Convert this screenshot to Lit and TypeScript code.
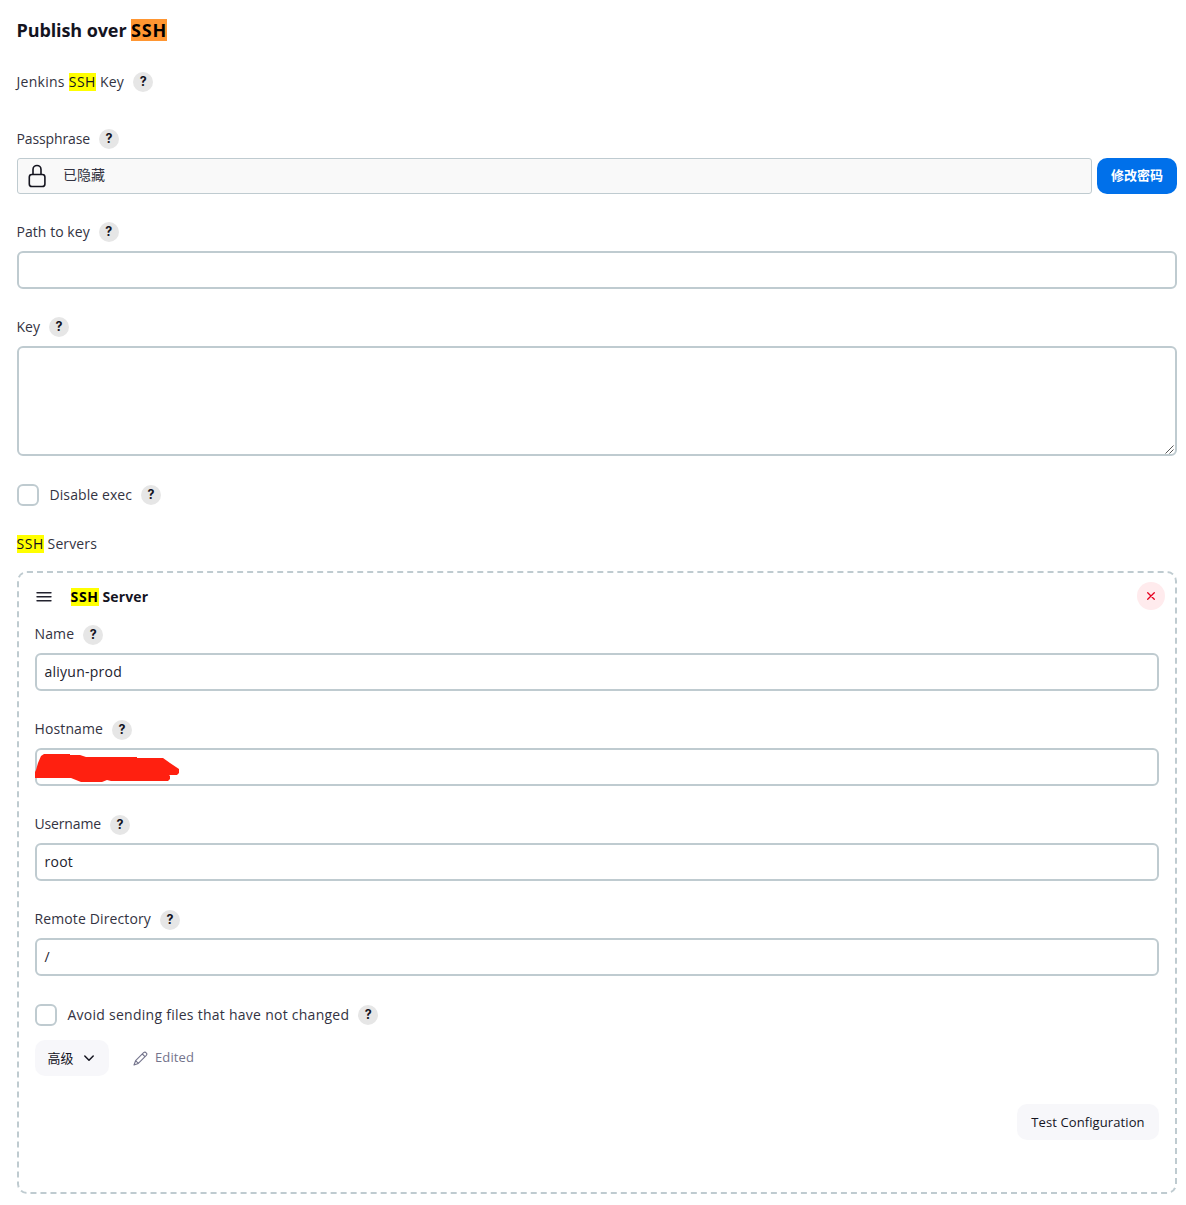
import { LitElement, html, css, svg, nothing } from "lit";
import { customElement, property } from "lit/decorators.js";

const FONT = css`"Segoe UI", "Open Sans", "Noto Sans", "Noto Sans CJK SC", sans-serif`;

@customElement("help-button")
class HelpButton extends LitElement {
  static styles = css`
    :host { display: flex; flex: none; width: 20px; height: 20px; border-radius: 50%; background: #e6e6e6;
      align-items: center; justify-content: center; font: 700 12.5px/20px "Inter", sans-serif; color: #14141f; }
  `;
  render() { return html`?`; }
}

@customElement("form-label")
class FormLabel extends LitElement {
  @property() mark = "";
  @property() before = "";
  @property() after = "";
  @property({ type: Number }) spacing = 0;
  @property({ type: Boolean }) help = false;
  static styles = css`
    :host { display: flex; align-items: center; height: 20px; gap: 9px; }
    .text { white-space: pre; font: 400 14px/20px ${FONT}; color: #333342; margin-left: -0.5px; }
    .mark { background: #ff0; color: #14141f; line-height: 18px; display: inline-block; height: 18px; letter-spacing: 0.55px; }
    :host([raised]) .text { position: relative; top: -1px; }
  `;
  render() {
    return html`<span class="text" style="letter-spacing:${this.spacing}px">${this.before}${this.mark ? html`<span class="mark">${this.mark}</span>` : nothing}${this.after}</span>${this.help ? html`<help-button></help-button>` : nothing}`;
  }
}

@customElement("app-root")
class AppRoot extends LitElement {
  static styles = css`
    * { box-sizing: border-box; }
    :host { display: block; height: 1205px; background: #fff; font: 400 14px/20px ${FONT}; color: #14141f; box-sizing: border-box; padding: 19px 9px 0 17px; }
    .page { display: flex; flex-direction: column; }
    .title { margin: 0 0 31px -0.5px; height: 22px; font-size: 18px; line-height: 22px; font-weight: 700; white-space: pre; letter-spacing: -0.1px; }
    .title span { display: inline-block; height: 22px; background: #ff9632; color: #000; letter-spacing: 0.8px; }
    .gap37 { margin-bottom: 37px; }
    .gap9 { margin-bottom: 9px; }
    .gap8 { margin-bottom: 8px; }
    .secret { display: flex; gap: 5px; margin-bottom: 28px; }
    .hidden { flex: 1; height: 36px; border: 1px solid #bfcbd0; border-radius: 3px; background: #f9f9f9; display: flex; align-items: center; padding-left: 7px; gap: 14px; line-height: 34px; }
    .hidden svg { width: 24px; height: 24px; }
    .hidden span { position: relative; top: -1px; color: #333342; }
    .primary { width: 80px; height: 36px; border-radius: 10px; background: #0070ea; color: #fff; display: grid; place-items: center; font-size: 13px; font-weight: 700; line-height: 18px; padding-bottom: 2px; }
    .input { height: 38px; border: 2px solid #bfcbd0; border-radius: 6px; background: #fff; padding: 0 7.5px; line-height: 33px; margin-bottom: 28px; position: relative; color: #22222e; letter-spacing: 0.25px; }
    .card .input:not(.last) { margin-bottom: 29px; }
    .area { height: 110px; display: flex; align-items: flex-end; justify-content: flex-end; padding: 0; }
    .area svg { width: 9px; height: 9px; margin: 0 1px 0 0; }
    .scribble { position: absolute; left: -2px; top: 2px; width: 146px; height: 30px; }
    .check { display: flex; align-items: center; gap: 11px; height: 22px; }
    .box { width: 22px; height: 22px; border: 2px solid #bfcbd0; border-radius: 6px; }
    .servers { margin-top: 28px; }
    .card { margin-top: 17px; height: 623px; border: 2px dashed #bfcbd0; border-radius: 10px; padding: 9px 16px 0; display: flex; flex-direction: column; }
    .head { display: flex; align-items: center; height: 28px; margin: 0 -6px 15px 0; }
    .head .grip { width: 18px; height: 18px; margin-right: 17.5px; }
    .head .name { flex: 1; font-weight: 700; white-space: pre; letter-spacing: 0.12px; padding-top: 1px; }
    .head .name span { display: inline-block; height: 18px; line-height: 18px; background: #ff0; color: #000; letter-spacing: 0.7px; }
    .remove { width: 28px; height: 28px; border-radius: 50%; background: #ffebed; display: grid; place-items: center; }
    .remove svg { width: 10px; height: 10px; }
    .tools { display: flex; align-items: center; margin-top: 14px; height: 36px; }
    .button { height: 36px; border-radius: 10px; background: #f7f7fa; display: flex; align-items: center; justify-content: center; font-size: 13px; }
    .advanced { width: 74px; gap: 9px; margin-right: 24px; padding-right: 2px; }
    .advanced svg { width: 12px; height: 12px; }
    .edited { display: flex; align-items: center; gap: 7px; font-size: 13px; color: #74748c; letter-spacing: 0.1px; }
    .edited span { margin-top: -2px; }
    .edited svg { width: 15px; height: 15px; }
    .test { width: 142px; align-self: flex-end; margin-top: 28px; letter-spacing: 0.1px; }
  `;

  field(label: string, content: unknown, spacing = 0, last = false) {
    return html`<form-label class="gap8" raised help before=${label} spacing=${spacing}></form-label>
      <div class="input ${last ? "last" : ""}">${content}</div>`;
  }

  render() {
    const scribble = svg`<path fill="#ff2010" d="M0 26V20L1 18L3 11L6 4L9 2H35V3H45L51 5H102V6H128L135 11L144 17V21L142 23H134L135 24V27L133 29H76L72 28L67 30H46L41 28L36 26Z"/>`;
    return html`<div class="page">
      <h2 class="title">Publish over <span>SSH</span></h2>
      <form-label class="gap37" help before="Jenkins " mark="SSH" after=" Key" spacing="0.27"></form-label>
      <form-label class="gap9" help before="Passphrase" spacing="-0.13"></form-label>
      <div class="secret">
        <div class="hidden">
          <svg viewBox="0 0 24 24" fill="none" stroke="#14141f" stroke-width="1.6" stroke-linejoin="round"><path d="M8 11V5.5a4 4 0 0 1 8 0V11"/><rect x="4.3" y="10.5" width="15.6" height="12" rx="2.6"/></svg>
          <span>已隐藏</span>
        </div>
        <div class="primary">修改密码</div>
      </div>
      <form-label class="gap9" help before="Path to key" spacing="0.05"></form-label>
      <div class="input"></div>
      <form-label class="gap9" help before="Key" spacing="0.05"></form-label>
      <div class="input area"><svg viewBox="0 0 9 9" stroke="#555" stroke-width="1"><path d="M0.5 8.5L8.5 0.5M4.5 8.5L8.5 4.5"/></svg></div>
      <div class="check"><span class="box"></span><form-label help before="Disable exec" spacing="0.09"></form-label></div>
      <form-label class="servers" mark="SSH" after=" Servers" spacing="0.12"></form-label>
      <section class="card">
        <div class="head">
          <svg class="grip" viewBox="0 0 18 18" stroke="#22222e" stroke-width="1.4" stroke-linecap="round"><path d="M2 5.8H16M2 9.8H16M2 13.8H16"/></svg>
          <div class="name"><span>SSH</span> Server</div>
          <div class="remove"><svg viewBox="0 0 10 10" stroke="#e6001f" stroke-width="1.3" stroke-linecap="round"><path d="M1.7 1.7L8.3 8.3M8.3 1.7L1.7 8.3"/></svg></div>
        </div>
        ${this.field("Name", "aliyun-prod", 0.12)}
        ${this.field("Hostname", html`<svg class="scribble" viewBox="0 0 146 30">${scribble}</svg>`, 0.12)}
        ${this.field("Username", "root", -0.15)}
        ${this.field("Remote Directory", "/", 0.12, true)}
        <div class="check"><span class="box"></span><form-label help before="Avoid sending files that have not changed" spacing="0.26"></form-label></div>
        <div class="tools">
          <div class="button advanced">高级<svg viewBox="0 0 12 12" fill="none" stroke="#14141f" stroke-width="1.5" stroke-linecap="round" stroke-linejoin="round"><path d="M1.8 4L6 8.2L10.2 4"/></svg></div>
          <div class="edited"><svg viewBox="0 0 15 15" fill="none" stroke="#74748c" stroke-width="1.1" stroke-linejoin="round" stroke-linecap="round"><path d="M1 14L2.6 9.7L10.6 1.7Q12 .5 13.2 1.8Q14.5 3 13.3 4.4L5.3 12.4ZM9.3 3L12 5.7M2.6 9.7L5.3 12.4"/></svg><span>Edited</span></div>
        </div>
        <div class="button test">Test Configuration</div>
      </section>
    </div>`;
  }
}
